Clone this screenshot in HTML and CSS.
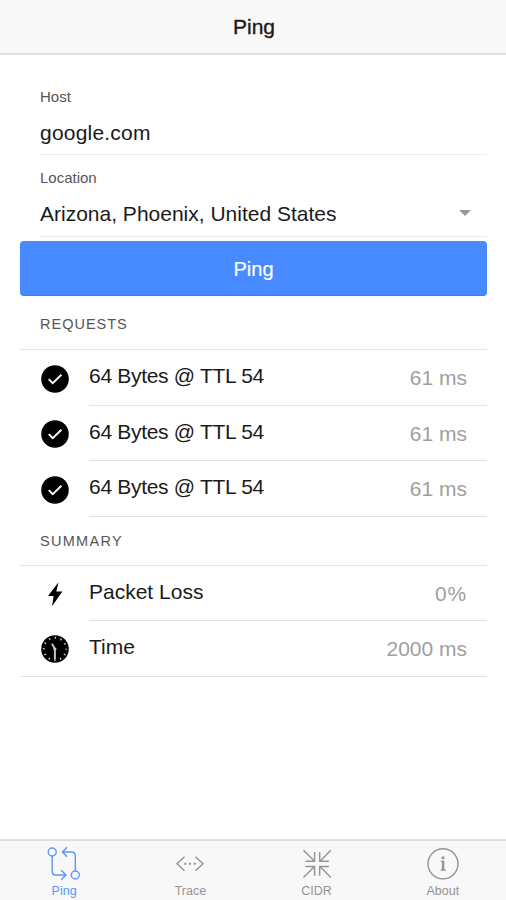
FILE: index.html
```html
<!DOCTYPE html>
<html lang="en">
<head>
    <meta charset="UTF-8">
    <title>Ping</title>
    <link rel="stylesheet" href="styles.css">
</head>
<body>
<svg class="defs" width="0" height="0">
    <symbol id="check" viewBox="0 0 28 28">
        <circle cx="14" cy="14" r="13.8"/>
        <path d="M7.7 14.2l4 4 8.700-8.500" fill="none" stroke="#fff" stroke-width="1.9"/>
    </symbol>
</svg>
<header class="header">
    <h1>Ping</h1>
</header>
<main class="content">
    <div class="field host">
        <label>Host</label>
        <div class="value domain">google.com</div>
    </div>
    <div class="field location">
        <label>Location</label>
        <div class="value">Arizona, Phoenix, United States<span class="arrow"></span></div>
    </div>
    <button class="btn">Ping</button>

    <h2 class="list-header">REQUESTS</h2>
    <ul class="list">
        <li>
            <svg class="icon"><use href="#check"/></svg>
            <div class="inner"><span class="label tight">64 Bytes @ TTL 54</span><span class="note">61 ms</span></div>
        </li>
        <li>
            <svg class="icon"><use href="#check"/></svg>
            <div class="inner"><span class="label tight">64 Bytes @ TTL 54</span><span class="note">61 ms</span></div>
        </li>
        <li>
            <svg class="icon"><use href="#check"/></svg>
            <div class="inner"><span class="label tight">64 Bytes @ TTL 54</span><span class="note">61 ms</span></div>
        </li>
    </ul>

    <h2 class="list-header summary-header">SUMMARY</h2>
    <ul class="list summary">
        <li>
            <svg class="icon" viewBox="0 0 28 28"><path d="M17.500 2.200L7 16h5.600l-1.500 10.300L21.300 11.600h-6z"/></svg>
            <div class="inner"><span class="label">Packet Loss</span><span class="note percent">0%</span></div>
        </li>
        <li>
            <svg class="icon" viewBox="0 0 28 28">
                <circle cx="14" cy="14" r="13.8"/>
                <circle cx="14" cy="14" r="11.2" fill="none" stroke="#ccc" stroke-width="2" stroke-dasharray="1.3 4.564" stroke-dashoffset=".65"/>
                <path d="M11 8.600l2.900 5.400v10.500" fill="none" stroke="#ccc" stroke-width="1.9"/>
                <circle cx="13.9" cy="14" r="1.600" fill="#ccc"/>
            </svg>
            <div class="inner"><span class="label">Time</span><span class="note">2000 ms</span></div>
        </li>
    </ul>
</main>
<nav class="tabs">
    <a class="tab active">
        <svg viewBox="0 0 34 36">
            <circle cx="5.2" cy="6" r="4"/>
            <circle cx="28.3" cy="29" r="4"/>
            <path d="M5.200 10v15.500q0 3.500 3.500 3.500h9M14.300 24.300l4.600 4.700-4.600 4.700M28.300 25V10q0-4-4-4h-8.600M20 1.300L15.400 6l4.600 4.700"/>
        </svg>
        <span>Ping</span>
    </a>
    <a class="tab">
        <svg viewBox="0 0 34 36">
            <path d="M11.500 10.700L4 17.800l7.500 7M22.500 10.700l7.500 7.100-7.500 7"/>
            <path d="M11.200 17.800h2M16 17.800h2M20.800 17.800h2" stroke-width="2"/>
        </svg>
        <span>Trace</span>
    </a>
    <a class="tab">
        <svg viewBox="0 0 34 36">
            <path d="M3.500 4.200l10.800 10.700M14.600 6v9.200H5.500M30.800 4.200L20.200 14.900M19.700 6v9.200h9.200M3.500 31.500l10.800-10.800M14.600 29.700v-9.200H5.500M30.800 31.500L20.200 20.700M19.700 29.700v-9.200h9.200"/>
        </svg>
        <span>CIDR</span>
    </a>
    <a class="tab">
        <svg viewBox="0 0 34 36">
            <circle cx="17" cy="17.800" r="15"/>
            <path d="M14.800 15.300h2.600v8.500M14.500 24.100h5.400" stroke-width="1.300"/>
            <path d="M17.100 15v9" stroke-width="2.400"/>
            <circle class="dot" cx="17" cy="11.800" r="1.600"/>
        </svg>
        <span>About</span>
    </a>
</nav>
</body>
</html>
```
FILE: styles.css
```css
*{
    margin: 0;
    padding: 0;
    box-sizing: border-box;
}
body{
    height: 900px;
    display: flex;
    flex-direction: column;
    overflow: hidden;
    background: #fff;
    color: #1a1a1a;
    font-family: "Liberation Sans", Arial, sans-serif;
    font-size: 21px;
}
.defs{
    position: absolute;
}
.icon{
    fill: #000;
}
.header{
    height: 55px;
    background: #f8f8f8;
    border-bottom: 2px solid #dedede;
    text-align: center;
}
.header h1{
    padding-left: 2px;
    font-size: 21px;
    line-height: 54px;
    font-weight: normal;
    -webkit-text-stroke: .35px #1a1a1a;
}
.content{
    flex: 1;
    padding: 32px 19px 0 20px;
}
.field{
    margin-left: 20px;
    border-bottom: 1px solid #ebebeb;
}
.field label{
    display: block;
    font-size: 15px;
    line-height: 20px;
    color: #555;
}
.host{
    height: 68px;
}
.location{
    height: 82px;
    padding-top: 13px;
}
.field .value{
    display: flex;
    justify-content: space-between;
    align-items: center;
    line-height: 24px;
    margin-top: 14px;
    padding-right: 16px;
}
.field .domain{
    letter-spacing: .2px;
}
.arrow{
    margin-top: -2px;
    border: 6px solid transparent;
    border-top-color: #999;
    border-bottom: 0;
}
.btn{
    display: block;
    width: 100%;
    height: 55px;
    margin-top: 4px;
    padding-top: 2px;
    border: 0;
    border-radius: 4px;
    border-bottom: 1px solid #3c7cf0;
    background: #488aff;
    color: #fff;
    font-family: inherit;
    font-size: 20px;
    -webkit-text-stroke: .2px #fff;
}
.list-header{
    height: 54px;
    padding-left: 20px;
    font-size: 14.5px;
    line-height: 57px;
    font-weight: normal;
    letter-spacing: 1px;
    color: #555;
    border-bottom: 1px solid #e2e2e2;
}
.summary-header{
    height: 49px;
    line-height: 48px;
    letter-spacing: 1.3px;
}
.list{
    list-style: none;
}
.list li{
    display: flex;
    align-items: center;
    padding-left: 20.5px;
    height: 55.5px;
}
.icon{
    width: 28px;
    height: 28px;
    margin-top: 2px;
}
.inner{
    flex: 1;
    height: 100%;
    display: flex;
    justify-content: space-between;
    margin-left: 20.5px;
    padding-right: 20px;
    line-height: 52px;
    border-bottom: 1px solid #e2e2e2;
}
.tight{
    letter-spacing: -.3px;
}
.note{
    line-height: 55px;
    color: #a0a0a0;
}
.percent{
    letter-spacing: .8px;
}
.summary li:last-child{
    border-bottom: 1px solid #e2e2e2;
}
.summary li:last-child .inner{
    border: 0;
}
.tabs{
    display: flex;
    height: 61px;
    padding-left: 1px;
    background: #f8f8f8;
    border-top: 2px solid #dedede;
}
.tab{
    flex: 1;
    display: flex;
    flex-direction: column;
    align-items: center;
    padding-top: 5px;
    font-size: 12.5px;
    line-height: 14px;
    color: #949494;
}
.tab svg{
    width: 34px;
    height: 36px;
    margin-bottom: 2px;
    fill: none;
    stroke: currentColor;
    stroke-width: 1.4;
}
.tab .dot{
    fill: currentColor;
    stroke: none;
}
.active{
    color: #5b94fb;
}
```
